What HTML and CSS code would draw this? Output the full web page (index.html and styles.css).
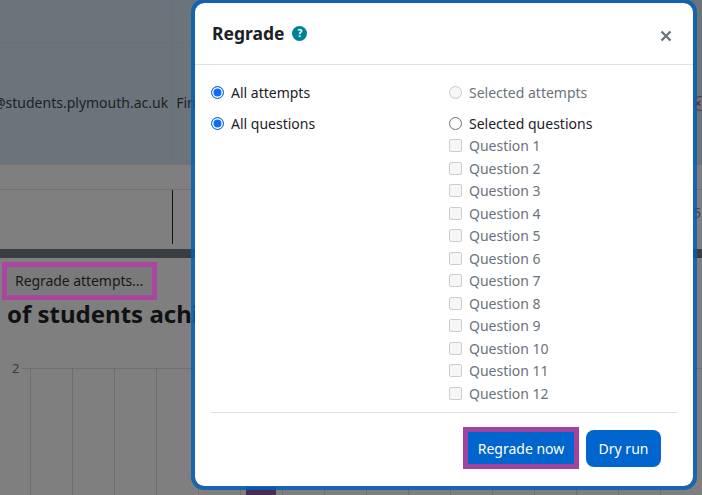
FILE: index.html
```html
<!DOCTYPE html>
<html lang="en">
<head>
<meta charset="utf-8">
<title>Regrade</title>
<link rel="stylesheet" href="styles.css">
</head>
<body>
<div class="page">
  <section class="table-top">
    <div class="hline"></div>
    <div class="user-row">
      <span class="email">@students.plymouth.ac.uk</span>
      <span class="state">Finished</span>
    </div>
    <span class="status-x">×</span>
  </section>
  <section class="table-foot">
    <div class="foot-row"><span class="foot-tick"></span><span class="foot-num">5.</span></div>
  </section>
  <div class="dark-bar"></div>
  <div class="regrade-wrap"><span class="regrade-btn">Regrade attempts...</span></div>
  <h2 class="chart-title">of students achieving grade</h2>
  <div class="chart">
    <span class="axis-label">2</span>
    <div class="plot"><div class="bar"></div></div>
  </div>

  <div class="modal" role="dialog">
    <header class="modal-head">
      <h3 class="modal-title">Regrade</h3>
      <span class="help">?</span>
      <svg class="close" viewBox="0 0 12 12" width="12" height="12"><path d="M1.5 1.5l9 9M10.5 1.5l-9 9" stroke="#6a737b" stroke-width="2.4" fill="none"/></svg>
    </header>
    <div class="modal-body">
      <div class="col">
        <label class="opt first"><span class="radio on"></span>All attempts</label>
        <label class="opt second"><span class="radio on"></span>All questions</label>
      </div>
      <div class="col">
        <label class="opt first muted"><span class="radio off"></span>Selected attempts</label>
        <label class="opt second"><span class="radio"></span>Selected questions</label>
        <ul class="questions">
          <li><span class="check"></span>Question 1</li>
          <li><span class="check"></span>Question 2</li>
          <li><span class="check"></span>Question 3</li>
          <li><span class="check"></span>Question 4</li>
          <li><span class="check"></span>Question 5</li>
          <li><span class="check"></span>Question 6</li>
          <li><span class="check"></span>Question 7</li>
          <li><span class="check"></span>Question 8</li>
          <li><span class="check"></span>Question 9</li>
          <li><span class="check"></span>Question 10</li>
          <li><span class="check"></span>Question 11</li>
          <li><span class="check"></span>Question 12</li>
        </ul>
      </div>
    </div>
    <footer class="modal-foot">
      <span class="primary highlighted">Regrade now</span>
      <span class="primary rounded">Dry run</span>
    </footer>
  </div>
</div>
</body>
</html>
```
FILE: styles.css
```css
* { box-sizing: border-box; }
html, body { margin: 0; padding: 0; }
body {
  width: 702px;
  height: 495px;
  overflow: hidden;
  background: #7f7f7f;
  font-family: "Noto Sans", "Open Sans", "Liberation Sans", sans-serif;
  color: #1d2125;
}
.page { position: relative; width: 702px; height: 495px; overflow: hidden; }

.table-top {
  position: relative;
  height: 165px;
  background: #6b747a;
  background-image: linear-gradient(#637478, #637478);
  background-size: 1px 100%;
  background-position: 172px 0;
  background-repeat: no-repeat;
}
.hline { height: 43px; border-bottom: 1px solid #637478; }
.user-row {
  display: flex;
  gap: 8px;
  padding-top: 50px;
  margin-left: -7px;
  font-size: 14px;
  line-height: 20px;
  color: #1e2225;
  white-space: nowrap;
}
.status-x {
  position: absolute;
  left: 693px;
  top: 96px;
  width: 15px;
  height: 15px;
  border: 1.5px solid #5c2a35;
  border-radius: 50%;
  color: #7a1f2a;
  font: bold 11px/12px "Liberation Sans", sans-serif;
  text-align: center;
  text-indent: -5px;
}
.table-foot { height: 84px; padding-top: 24px; }
.foot-row {
  position: relative;
  height: 60px;
  border-top: 1px solid #717171;
}
.foot-tick {
  position: absolute;
  left: 172px;
  top: 0;
  width: 1px;
  height: 54px;
  background: #111;
}
.foot-num {
  position: absolute;
  left: 693px;
  top: 13px;
  font-size: 14px;
  color: #40474d;
}
.dark-bar { height: 9px; background: #3a3d41; }
.regrade-wrap { padding: 4px 0 0 2px; height: 42px; }
.regrade-btn {
  display: inline-flex;
  align-items: center;
  width: 155px;
  height: 38px;
  padding: 0 0 2px 8px;
  border: 5px solid #a9469f;
  background: #7a7a7a;
  font-size: 14px;
  letter-spacing: -0.06px;
  color: #16191c;
  white-space: nowrap;
}
.chart-title {
  margin: 0 0 0 7px;
  height: 34px;
  font-size: 24px;
  line-height: 27px;
  font-weight: 700;
  color: #0f1113;
  white-space: nowrap;
}
.chart { position: relative; padding: 34px 0 0 22px; }
.axis-label {
  position: absolute;
  left: 12px;
  top: 25px;
  font-size: 13px;
  line-height: 18px;
  color: #3a3a3a;
}
.plot {
  position: relative;
  height: 140px;
  border-top: 1px solid #6f6f6f;
  background-image: repeating-linear-gradient(90deg, #6f6f6f 0 1px, transparent 1px 42px);
  background-position: 8px 0;
  background-repeat: no-repeat;
  background-size: 100% 100%;
}
.bar {
  position: absolute;
  left: 224px;
  top: 118px;
  width: 30px;
  height: 20px;
  background: #4a2d55;
}

.modal {
  position: absolute;
  left: 191px;
  top: -1px;
  width: 506px;
  height: 491px;
  background: #fff;
  background-clip: padding-box;
  border: 4px solid rgba(0, 95, 190, 0.8);
  border-radius: 13px;
  display: flex;
  flex-direction: column;
  font-size: 14px;
}
.modal-head {
  position: relative;
  display: flex;
  align-items: center;
  gap: 8px;
  flex: none;
  height: 62px;
  padding: 0 17px;
  border-bottom: 1px solid #dee2e6;
}
.modal-title { margin: 0 0 2px; font-size: 17.5px; line-height: 26px; font-weight: 700; color: #1d2125; }
.help {
  width: 15px;
  height: 15px;
  border-radius: 50%;
  background: #008196;
  color: #fff;
  font-size: 10px;
  line-height: 15px;
  font-weight: 700;
  text-align: center;
}
.close { position: absolute; left: 465px; top: 27px; }
.modal-body {
  position: relative;
  display: grid;
  grid-template-columns: 238px 1fr;
  flex: none;
  height: 348px;
  padding: 16.5px 0 0 16px;
}
.modal-body::after {
  content: "";
  position: absolute;
  left: 16px;
  right: 16px;
  bottom: 0;
  height: 1px;
  background: #dee2e6;
}
.opt {
  display: flex;
  align-items: center;
  gap: 7px;
  height: 22px;
  font-size: 14px;
  white-space: nowrap;
}
.first { margin-bottom: 9px; }
.muted { color: #6a737b; }
.radio {
  flex: none;
  width: 13px;
  height: 13px;
  border-radius: 50%;
  border: 1px solid #6f6f6f;
  background: #fff;
}
.radio.on { border: 1.5px solid #0f6cbf; background: #0f6cff; box-shadow: inset 0 0 0 1.5px #fff; }
.radio.off { border-color: #c9c9c9; background: #f6f6f6; }
.questions { list-style: none; margin: 0; padding: 0; }
.questions li {
  display: flex;
  align-items: center;
  gap: 7px;
  height: 22.5px;
  color: #6a737b;
  font-size: 14px;
}
.check {
  width: 13px;
  height: 13px;
  border: 1px solid #cdcdcd;
  border-radius: 2px;
  background: #f6f6f6;
}
.modal-foot {
  display: flex;
  align-items: center;
  justify-content: flex-end;
  gap: 7px;
  padding: 14px 32px 0 0;
}
.primary {
  display: flex;
  align-items: center;
  justify-content: center;
  background: #0065cc;
  color: #fff;
  font-size: 14px;
  white-space: nowrap;
}
.highlighted { width: 116px; height: 42px; border: 5px solid #a044a0; }
.rounded { width: 75px; height: 37px; border-radius: 8px; }
```
